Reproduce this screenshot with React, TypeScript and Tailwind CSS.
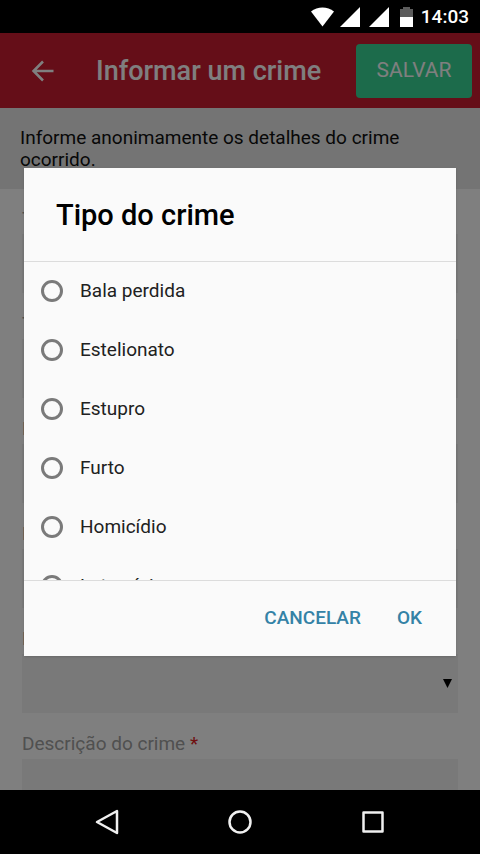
import React from "react";

const crimes = [
  "Bala perdida",
  "Estelionato",
  "Estupro",
  "Furto",
  "Homicídio",
  "Latrocínio",
];

const fields = [
  { id: "titulo", label: "Título" },
  { id: "tipo", label: "Tipo do crime" },
  { id: "data", label: "Data" },
  { id: "hora", label: "Hora" },
  { id: "bairro", label: "Bairro", select: true },
  { id: "descricao", label: "Descrição do crime" },
];

const StatusBar = () => (
  <div className="flex h-[33px] shrink-0 items-center justify-end bg-black pr-[11px] text-white">
    <svg width="23" height="20" viewBox="0 0 23 20" fill="currentColor" aria-hidden="true">
      <path d="M0 4.5C6.5-.8 16.5-.8 23 4.5L11.5 19.5z" />
    </svg>
    <svg className="ml-[6px]" width="20" height="20" viewBox="0 0 20 20" fill="currentColor" aria-hidden="true">
      <path d="M20 0v20H0z" />
    </svg>
    <svg className="ml-[9px]" width="20" height="20" viewBox="0 0 20 20" fill="currentColor" aria-hidden="true">
      <path d="M20 0v20H0z" />
    </svg>
    <svg className="ml-[11px]" width="13" height="20" viewBox="0 0 13 20" aria-hidden="true">
      <path d="M3 0h7v2h3v8H0V2h3z" fill="#5c5c5c" />
      <path d="M0 10h13v10H0z" fill="#fff" />
    </svg>
    <span className="ml-2 text-[19px] leading-6 font-medium">14:03</span>
  </div>
);

const Header = () => (
  <header className="flex h-[75px] items-center bg-[#ca1c30] pr-2 pl-[30px] text-white">
    <button type="button" aria-label="Voltar">
      <svg width="24" height="24" viewBox="0 0 24 24" fill="none" stroke="currentColor" strokeWidth="2.5" aria-hidden="true">
        <path d="M23.5 12H3.5M13 2.5L3.5 12l9.5 9.5" />
      </svg>
    </button>
    <h1 className="ml-[42px] flex-1 text-[27px] leading-8 font-medium whitespace-nowrap">
      Informar um crime
    </h1>
    <button type="button" className="h-[54px] min-w-[116px] rounded bg-[#38d696] px-5 text-[21px] text-white">
      SALVAR
    </button>
  </header>
);

const Form = () => (
  <form className="flex flex-col gap-[17px] px-[22px] pt-[16px]">
    {fields.map((field) => (
      <div key={field.id}>
        <label htmlFor={field.id} className="block h-[29px] text-[19px] leading-7 text-[#a0a0a0]">
          {field.label} <span className="text-[#e02020]">*</span>
        </label>
        {field.select ? (
          <div className="relative">
            <select id={field.id} className="block h-[59px] w-full appearance-none bg-[#f2f2f2]" />
            <svg className="pointer-events-none absolute top-[25px] right-[6px]" width="9" height="9" viewBox="0 0 9 9" aria-hidden="true">
              <path d="M0 0h9L4.5 9z" />
            </svg>
          </div>
        ) : (
          <input id={field.id} className="block h-[59px] w-full bg-[#f2f2f2]" />
        )}
      </div>
    ))}
  </form>
);

const CrimeDialog = () => (
  <div className="absolute inset-0 flex bg-black/50 px-6 pt-[135px] pb-[134px]">
    <div
      role="dialog"
      aria-labelledby="dialog-title"
      className="flex w-full flex-col bg-[#fafafa] shadow-sm"
    >
      <h2 id="dialog-title" className="border-b border-[#dcdcdc] px-8 pt-[31px] pb-[30px] text-[29px] leading-8 font-medium text-black">
        Tipo do crime
      </h2>
      <div className="flex min-h-0 flex-1 flex-col gap-px overflow-hidden">
        {crimes.map((crime) => (
          <label key={crime} className="flex h-[58px] shrink-0 items-center pl-[17px] text-[19px] leading-6 text-[#212121]">
            <input
              type="radio"
              name="crime"
              className="mr-[17px] size-[22px] appearance-none rounded-full border-3 border-[#7a7a7a]"
            />
            {crime}
          </label>
        ))}
      </div>
      <div className="flex h-[76px] shrink-0 items-center justify-end gap-9 border-t border-[#dcdcdc] pr-[34px] text-[19px] font-medium text-[#3482a6]">
        <button type="button">CANCELAR</button>
        <button type="button">OK</button>
      </div>
    </div>
  </div>
);

const NavBar = () => (
  <nav className="flex h-16 shrink-0 items-center justify-center gap-[109px] bg-black text-[#f0f0f0]">
    <button type="button" aria-label="Voltar">
      <svg width="24" height="26" viewBox="0 0 24 26" fill="none" stroke="currentColor" strokeWidth="2.5" strokeLinejoin="round" aria-hidden="true">
        <path d="M22 2v22L2 13z" />
      </svg>
    </button>
    <button type="button" aria-label="Início">
      <svg width="24" height="24" viewBox="0 0 24 24" fill="none" stroke="currentColor" strokeWidth="2.5" aria-hidden="true">
        <circle cx="12" cy="12" r="10.5" />
      </svg>
    </button>
    <button type="button" aria-label="Recentes">
      <svg width="24" height="24" viewBox="0 0 24 24" fill="none" stroke="currentColor" strokeWidth="2.5" strokeLinejoin="round" aria-hidden="true">
        <path d="M2.5 2.5h19v19h-19z" />
      </svg>
    </button>
  </nav>
);

const App = () => {
  return (
    <div className="flex h-screen flex-col bg-black font-[Roboto,sans-serif]">
      <StatusBar />
      <main className="relative min-h-0 flex-1 overflow-hidden bg-white">
        <Header />
        <p className="bg-[#e8e8e8] px-5 pt-[19px] pb-[18px] text-[19px] leading-[22px] text-[#101010]">
          Informe anonimamente os detalhes do crime ocorrido.
        </p>
        <Form />
        <CrimeDialog />
      </main>
      <NavBar />
    </div>
  );
};

export default App;
